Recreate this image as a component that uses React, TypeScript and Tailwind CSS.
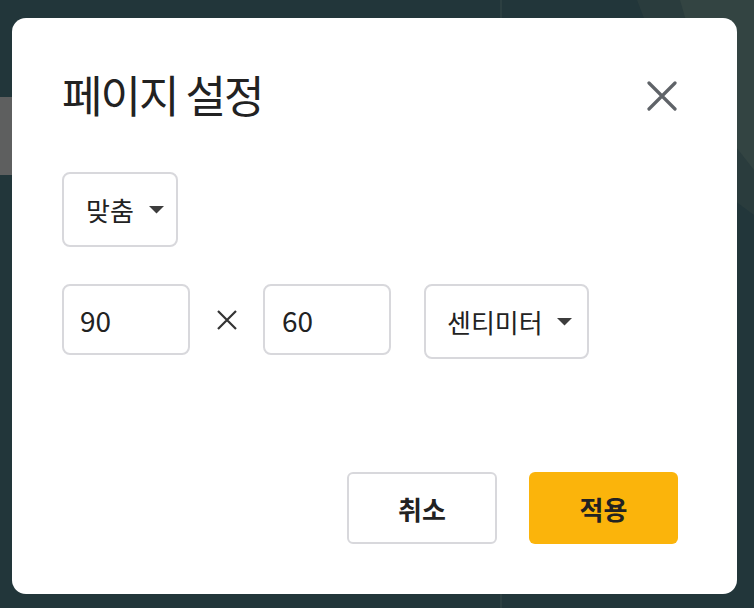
import React from "react";

const font = { fontFamily: '"Noto Sans CJK KR", "Noto Sans", sans-serif' };

function Caret() {
  return (
    <svg width="15" height="8" viewBox="0 0 15 8" className="shrink-0">
      <path d="M0 0 L15 0 L7.5 7.5 Z" fill="#3c3c3c" />
    </svg>
  );
}

export default function App() {
  return (
    <div
      className="relative w-[754px] h-[608px] overflow-hidden bg-[#22363a]"
      style={font}
    >
      {/* backdrop decorations */}
      <div className="absolute left-[500px] top-0 w-[2px] h-full bg-[#2c3f41]" />
      <div className="absolute left-0 top-[97px] w-[12px] h-[78px] bg-[#5e5f5f]" />
      <div className="absolute inset-0 bg-[#2a3c3d] [clip-path:polygon(637px_0,754px_0,754px_215px,700px_175px,660px_60px)]" />
      <div className="absolute inset-0 bg-[#334442] [clip-path:polygon(680px_0,754px_0,754px_170px,715px_120px)]" />

      <div className="relative ml-[12px] mt-[18px] w-[725px] h-[576px] bg-white rounded-[14px] pl-[50px] pr-[59px] pt-[50px] pb-[50px] flex flex-col">
        <div className="flex items-center justify-between h-[56px]">
          <h1 className="mb-[4px] text-[44px] leading-none text-[#222] tracking-[-0.045em] font-normal">
            페이지 설정
          </h1>
          <svg width="30" height="30" viewBox="0 0 30 30" className="mr-[1px]">
            <path
              d="M2 2 L28 28 M28 2 L2 28"
              stroke="#5f6368"
              strokeWidth="3.2"
              strokeLinecap="round"
            />
          </svg>
        </div>

        <div className="mt-[48px] flex">
          <div className="w-[116px] h-[75px] border-2 border-[#d8d8dc] rounded-[8px] flex items-center pl-[22px] gap-[15px]">
            <span className="text-[26px] text-[#222]">맞춤</span>
            <Caret />
          </div>
        </div>

        <div className="mt-[37px] flex items-start">
          <div className="w-[128px] h-[71px] border-2 border-[#d8d8dc] rounded-[8px] flex items-center pl-[16px] text-[28px] text-[#222]">
            90
          </div>
          <div className="w-[73px] h-[71px] flex items-center justify-center">
            <svg width="22" height="22" viewBox="0 0 22 22">
              <path d="M2 2 L20 20 M20 2 L2 20" stroke="#333" strokeWidth="2.2" />
            </svg>
          </div>
          <div className="w-[128px] h-[71px] border-2 border-[#d8d8dc] rounded-[8px] flex items-center pl-[17px] text-[28px] text-[#222]">
            60
          </div>
          <div className="ml-[33px] w-[165px] h-[75px] border-2 border-[#d8d8dc] rounded-[8px] flex items-center pl-[21px] gap-[14px]">
            <span className="text-[26px] text-[#222]">센티미터</span>
            <Caret />
          </div>
        </div>

        <div className="mt-auto flex justify-end gap-[32px]">
          <button className="w-[150px] h-[72px] border-2 border-[#d8d8dc] rounded-[6px] bg-white text-[26px] font-bold text-[#222] flex items-center justify-center">
            취소
          </button>
          <button className="w-[149px] h-[72px] rounded-[6px] bg-[#fbb40b] text-[26px] font-bold text-[#222] flex items-center justify-center">
            적용
          </button>
        </div>
      </div>
    </div>
  );
}
